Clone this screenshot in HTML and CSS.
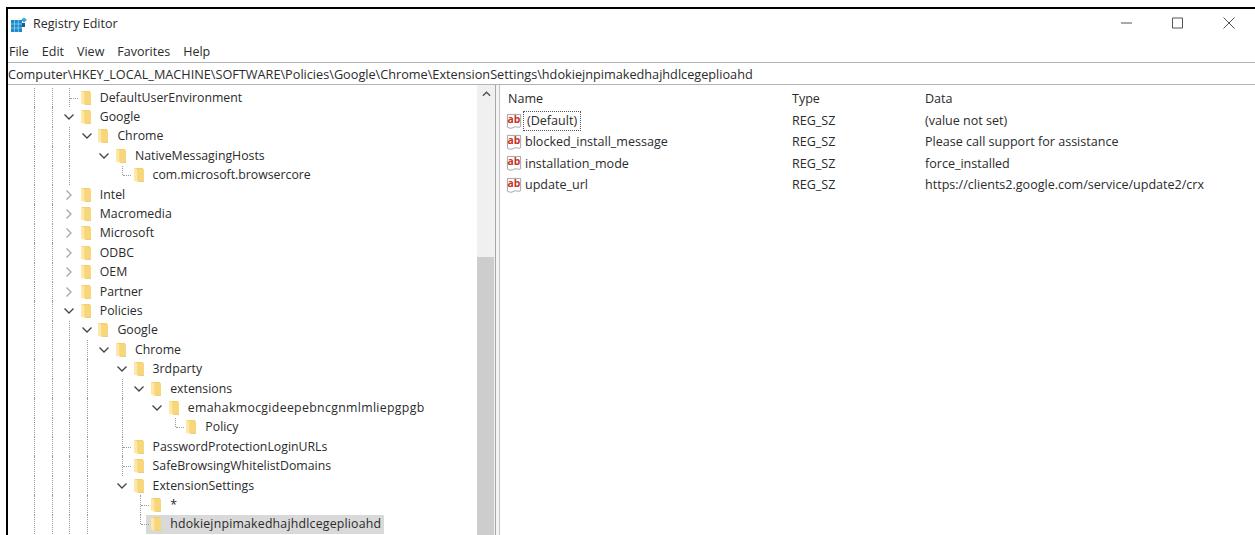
FILE: index.html
```html
<!DOCTYPE html>
<html lang="en">
<head>
<meta charset="utf-8">
<title>Registry Editor</title>
<link rel="stylesheet" href="styles.css">
</head>
<body>
<svg class="sprite" width="0" height="0" aria-hidden="true">
  <symbol id="folder" viewBox="0 0 12 16">
    <path d="M1 1h9v12.500H1z" fill="#f4cf6e"/>
    <path d="M1 1l3.500 1.200v12.800L1 13.500z" fill="#fde8a8"/>
    <path d="M4.500 2.200H11V14H4.500z" fill="#f8d67c"/>
    <path d="M4.500 14H11v1H5.500z" fill="#ecce80"/>
  </symbol>
  <symbol id="down" viewBox="0 0 12 12"><path d="M1.500 3.500L6 8l4.500-4.500" fill="none" stroke="#444" stroke-width="1.300"/></symbol>
  <symbol id="right" viewBox="0 0 12 12"><path d="M3.500 1.500L8 6l-4.500 4.500" fill="none" stroke="#a6a6a6" stroke-width="1.300"/></symbol>
  <symbol id="sheet" viewBox="0 0 18 18">
    <path d="M1.500 1.500h14v13c-2.500 1.800-4.500-1-7 .5s-4.500 1.500-7 0z" fill="#fff" stroke="#a0a0a0"/>
  </symbol>
</svg>

<div class="window">
  <header class="titlebar">
    <svg class="app-icon" viewBox="0 0 16 16" aria-hidden="true">
      <path d="M0 3h11v12H0z" fill="#1e88c9"/>
      <path d="M3.500 3v12M7.300 3v12M0 7h11M0 11h11" stroke="#8fd0f2" stroke-width=".8"/>
      <path d="M10 3l3-2.500L16 3l-3 2.500z" fill="#35a6dd"/>
      <path d="M11 6h3v4h-3z" fill="#175f94"/>
    </svg>
    <span class="app-title">Registry Editor</span>
    <div class="controls">
      <svg class="ctl" viewBox="0 0 12 12"><path d="M0 6h11" stroke="#555"/></svg>
      <svg class="ctl" viewBox="0 0 12 12"><path d="M.5 1h10v10H.5z" fill="none" stroke="#555"/></svg>
      <svg class="ctl" viewBox="0 0 12 12"><path d="M.5.5l11 11M11.500.5l-11 11" stroke="#555"/></svg>
    </div>
  </header>
  <nav class="menubar"><span>File</span><span>Edit</span><span>View</span><span>Favorites</span><span>Help</span></nav>
  <div class="address">Computer\HKEY_LOCAL_MACHINE\SOFTWARE\Policies\Google\Chrome\ExtensionSettings\hdokiejnpimakedhajhdlcegeplioahd</div>

  <main class="panes">
    <section class="tree-pane">
      <div class="tree">
        <div class="row"><i class="g"></i><i class="g"></i><b class="twist tee"></b><svg class="folder"><use href="#folder"/></svg><span class="name">DefaultUserEnvironment</span></div>
        <div class="row"><i class="g"></i><i class="g"></i><b class="twist"><svg class="chev"><use href="#down"/></svg></b><svg class="folder"><use href="#folder"/></svg><span class="name">Google</span></div>
        <div class="row"><i class="g"></i><i class="g"></i><i class="g"></i><b class="twist"><svg class="chev"><use href="#down"/></svg></b><svg class="folder"><use href="#folder"/></svg><span class="name">Chrome</span></div>
        <div class="row"><i class="g"></i><i class="g"></i><i class="g"></i><i></i><b class="twist"><svg class="chev"><use href="#down"/></svg></b><svg class="folder"><use href="#folder"/></svg><span class="name">NativeMessagingHosts</span></div>
        <div class="row"><i class="g"></i><i class="g"></i><i class="g"></i><i></i><i></i><b class="twist elbow"></b><svg class="folder"><use href="#folder"/></svg><span class="name">com.microsoft.browsercore</span></div>
        <div class="row"><i class="g"></i><i class="g"></i><b class="twist"><svg class="chev"><use href="#right"/></svg></b><svg class="folder"><use href="#folder"/></svg><span class="name">Intel</span></div>
        <div class="row"><i class="g"></i><i class="g"></i><b class="twist"><svg class="chev"><use href="#right"/></svg></b><svg class="folder"><use href="#folder"/></svg><span class="name">Macromedia</span></div>
        <div class="row"><i class="g"></i><i class="g"></i><b class="twist"><svg class="chev"><use href="#right"/></svg></b><svg class="folder"><use href="#folder"/></svg><span class="name">Microsoft</span></div>
        <div class="row"><i class="g"></i><i class="g"></i><b class="twist"><svg class="chev"><use href="#right"/></svg></b><svg class="folder"><use href="#folder"/></svg><span class="name">ODBC</span></div>
        <div class="row"><i class="g"></i><i class="g"></i><b class="twist"><svg class="chev"><use href="#right"/></svg></b><svg class="folder"><use href="#folder"/></svg><span class="name">OEM</span></div>
        <div class="row"><i class="g"></i><i class="g"></i><b class="twist"><svg class="chev"><use href="#right"/></svg></b><svg class="folder"><use href="#folder"/></svg><span class="name">Partner</span></div>
        <div class="row"><i class="g"></i><i class="g"></i><b class="twist"><svg class="chev"><use href="#down"/></svg></b><svg class="folder"><use href="#folder"/></svg><span class="name">Policies</span></div>
        <div class="row"><i class="g"></i><i class="g"></i><i class="g"></i><b class="twist"><svg class="chev"><use href="#down"/></svg></b><svg class="folder"><use href="#folder"/></svg><span class="name">Google</span></div>
        <div class="row"><i class="g"></i><i class="g"></i><i class="g"></i><i class="g"></i><b class="twist"><svg class="chev"><use href="#down"/></svg></b><svg class="folder"><use href="#folder"/></svg><span class="name">Chrome</span></div>
        <div class="row"><i class="g"></i><i class="g"></i><i class="g"></i><i class="g"></i><i></i><b class="twist"><svg class="chev"><use href="#down"/></svg></b><svg class="folder"><use href="#folder"/></svg><span class="name">3rdparty</span></div>
        <div class="row"><i class="g"></i><i class="g"></i><i class="g"></i><i class="g"></i><i></i><i class="g"></i><b class="twist"><svg class="chev"><use href="#down"/></svg></b><svg class="folder"><use href="#folder"/></svg><span class="name">extensions</span></div>
        <div class="row"><i class="g"></i><i class="g"></i><i class="g"></i><i class="g"></i><i></i><i class="g"></i><i></i><b class="twist"><svg class="chev"><use href="#down"/></svg></b><svg class="folder"><use href="#folder"/></svg><span class="name hash-wide">emahakmocgideepebncgnmlmliepgpgb</span></div>
        <div class="row"><i class="g"></i><i class="g"></i><i class="g"></i><i class="g"></i><i></i><i class="g"></i><i></i><i></i><b class="twist elbow"></b><svg class="folder"><use href="#folder"/></svg><span class="name">Policy</span></div>
        <div class="row"><i class="g"></i><i class="g"></i><i class="g"></i><i class="g"></i><i></i><b class="twist tee"></b><svg class="folder"><use href="#folder"/></svg><span class="name">PasswordProtectionLoginURLs</span></div>
        <div class="row"><i class="g"></i><i class="g"></i><i class="g"></i><i class="g"></i><i></i><b class="twist tee"></b><svg class="folder"><use href="#folder"/></svg><span class="name">SafeBrowsingWhitelistDomains</span></div>
        <div class="row"><i class="g"></i><i class="g"></i><i class="g"></i><i class="g"></i><i></i><b class="twist"><svg class="chev"><use href="#down"/></svg></b><svg class="folder"><use href="#folder"/></svg><span class="name">ExtensionSettings</span></div>
        <div class="row"><i class="g"></i><i class="g"></i><i class="g"></i><i class="g"></i><i></i><i></i><b class="twist tee"></b><svg class="folder"><use href="#folder"/></svg><span class="name">*</span></div>
        <div class="row"><i class="g"></i><i class="g"></i><i class="g"></i><i class="g"></i><i></i><i></i><b class="twist elbow"></b><div class="selected"><svg class="folder"><use href="#folder"/></svg><span class="name hash">hdokiejnpimakedhajhdlcegeplioahd</span></div></div>
      </div>
      <div class="scrollbar">
        <div class="scroll-up"><svg class="arrow" viewBox="0 0 10 6"><path d="M1 5l4-4 4 4" fill="none" stroke="#505050" stroke-width="1.500"/></svg></div>
        <div class="thumb"></div>
      </div>
    </section>
    <div class="splitter"></div>
    <section class="values">
      <div class="values-head"><span class="col-name">Name</span><span class="col-type">Type</span><span class="col-data">Data</span></div>
      <div class="value"><span class="col-name"><svg class="sz" viewBox="0 0 18 18"><use href="#sheet"/><text x="8.500" y="10.500" text-anchor="middle" class="sz-text">ab</text></svg><span class="focused">(Default)</span></span><span class="col-type">REG_SZ</span><span class="col-data">(value not set)</span></div>
      <div class="value"><span class="col-name"><svg class="sz" viewBox="0 0 18 18"><use href="#sheet"/><text x="8.500" y="10.500" text-anchor="middle" class="sz-text">ab</text></svg><span class="vname">blocked_install_message</span></span><span class="col-type">REG_SZ</span><span class="col-data">Please call support for assistance</span></div>
      <div class="value"><span class="col-name"><svg class="sz" viewBox="0 0 18 18"><use href="#sheet"/><text x="8.500" y="10.500" text-anchor="middle" class="sz-text">ab</text></svg><span class="vname">installation_mode</span></span><span class="col-type">REG_SZ</span><span class="col-data">force_installed</span></div>
      <div class="value"><span class="col-name"><svg class="sz" viewBox="0 0 18 18"><use href="#sheet"/><text x="8.500" y="10.500" text-anchor="middle" class="sz-text">ab</text></svg><span class="vname">update_url</span></span><span class="col-type">REG_SZ</span><span class="col-data">https://clients2.google.com/service/update2/crx</span></div>
    </section>
  </main>
</div>
</body>
</html>
```
FILE: styles.css
```css
html, body {
  margin: 0;
  height: 100%;
  background: #fff;
  overflow: hidden;
}

body {
  padding: 7px 0 0 6px;
  box-sizing: border-box;
  font: 12px/16px "Open Sans", "Noto Sans", sans-serif;
  color: #2b2b2b;
}

.sprite { position: absolute; }

.sz-text {
  font: 700 11px "Open Sans", sans-serif;
  fill: #c8331f;
}

.window {
  height: 100%;
  display: flex;
  flex-direction: column;
  border-top: 2px solid #000;
  border-left: 2px solid #000;
}

/* title bar */
.titlebar {
  height: 31px;
  flex: none;
  display: flex;
  align-items: center;
  padding-left: 3px;
}

.app-icon { width: 16px; height: 16px; }
.app-title { margin-left: 6px; font-size: 12.500px; margin-top: -1px; }

.controls {
  margin-left: auto;
  margin-top: -3px;
  display: flex;
  gap: 39px;
  padding-right: 20px;
}

.ctl { width: 12px; height: 12px; display: block; }

/* menu bar */
.menubar {
  height: 22px;
  flex: none;
  display: flex;
  gap: 13px;
  align-items: center;
  padding: 2px 0 0 1px;
  box-sizing: border-box;
  font-size: 12.500px;
}

/* address bar */
.address {
  height: 21px;
  flex: none;
  line-height: 23px;
  white-space: nowrap;
  overflow: hidden;
  border-top: 1px solid #b4b4b4;
  border-bottom: 1px solid #b4b4b4;
  font-size: 12.700px;
}

.panes {
  flex: 1;
  min-height: 0;
  display: flex;
}

/* key tree */
.tree-pane {
  width: 487px;
  flex: none;
  display: flex;
  overflow: hidden;
}

.tree {
  flex: 1;
  padding: 3px 0 0 17px;
  overflow: hidden;
  font-size: 12.300px;
}

.row {
  height: 19.400px;
  display: flex;
  align-items: center;
  white-space: nowrap;
}

.row > i {
  width: 17.600px;
  height: 100%;
  flex: none;
  position: relative;
}

.row > .g::before {
  content: "";
  position: absolute;
  left: 9px;
  top: 0;
  bottom: 0;
  border-left: 1px dotted #9a9a9a;
}

.twist {
  width: 17.600px;
  height: 100%;
  flex: none;
  position: relative;
  display: flex;
  align-items: center;
  justify-content: center;
}

.tee::before, .elbow::before {
  content: "";
  position: absolute;
  left: 9px;
  top: 0;
  border-left: 1px dotted #9a9a9a;
}

.tee::before { bottom: 0; }
.elbow::before { bottom: 50%; }

.tee::after, .elbow::after {
  content: "";
  position: absolute;
  left: 10px;
  width: 8px;
  top: 50%;
  border-top: 1px dotted #9a9a9a;
}

.chev { width: 12px; height: 12px; }

.folder {
  width: 12px;
  height: 16px;
  margin-left: 2px;
  flex: none;
}

.name { margin-left: 8px; }
.hash { letter-spacing: .21px; }
.hash-wide { letter-spacing: .33px; }

.selected {
  display: flex;
  align-items: center;
  height: 19px;
  width: 236px;
  margin-left: -2px;
  padding-left: 2px;
  background: #d9d9d9;
}

/* scrollbar */
.scrollbar {
  width: 18px;
  flex: none;
  background: #f0f0f0;
}

.scroll-up {
  height: 18px;
  display: flex;
  align-items: center;
  justify-content: center;
}

.arrow { width: 9px; height: 6px; }

.thumb {
  height: 400px;
  margin: 154px 1px 0 0;
  background: #cdcdcd;
}

/* divider between the panes */
.splitter {
  width: 5px;
  flex: none;
  box-sizing: border-box;
  border-left: 1px solid #a8a8a8;
  border-right: 1px solid #c4c4c4;
  background: #f4f4f4;
}

/* value list */
.values {
  flex: 1;
  padding-top: 5px;
  min-width: 0;
  font-size: 12.550px;
}

.values-head, .value {
  display: flex;
  align-items: center;
  white-space: nowrap;
}

.values-head { height: 17px; margin-bottom: 3.500px; }
.value { height: 21.300px; }

.col-name { width: 292px; padding-left: 8px; box-sizing: border-box; display: flex; align-items: center; }
.col-type { width: 133px; }
.col-data { flex: 1; }

.sz { width: 17px; height: 17px; flex: none; margin-left: -2px; }
.vname { margin-left: 2px; }

.focused {
  margin-left: 1px;
  padding: 1px 3px;
  outline: 1px dotted #555;
}
```
